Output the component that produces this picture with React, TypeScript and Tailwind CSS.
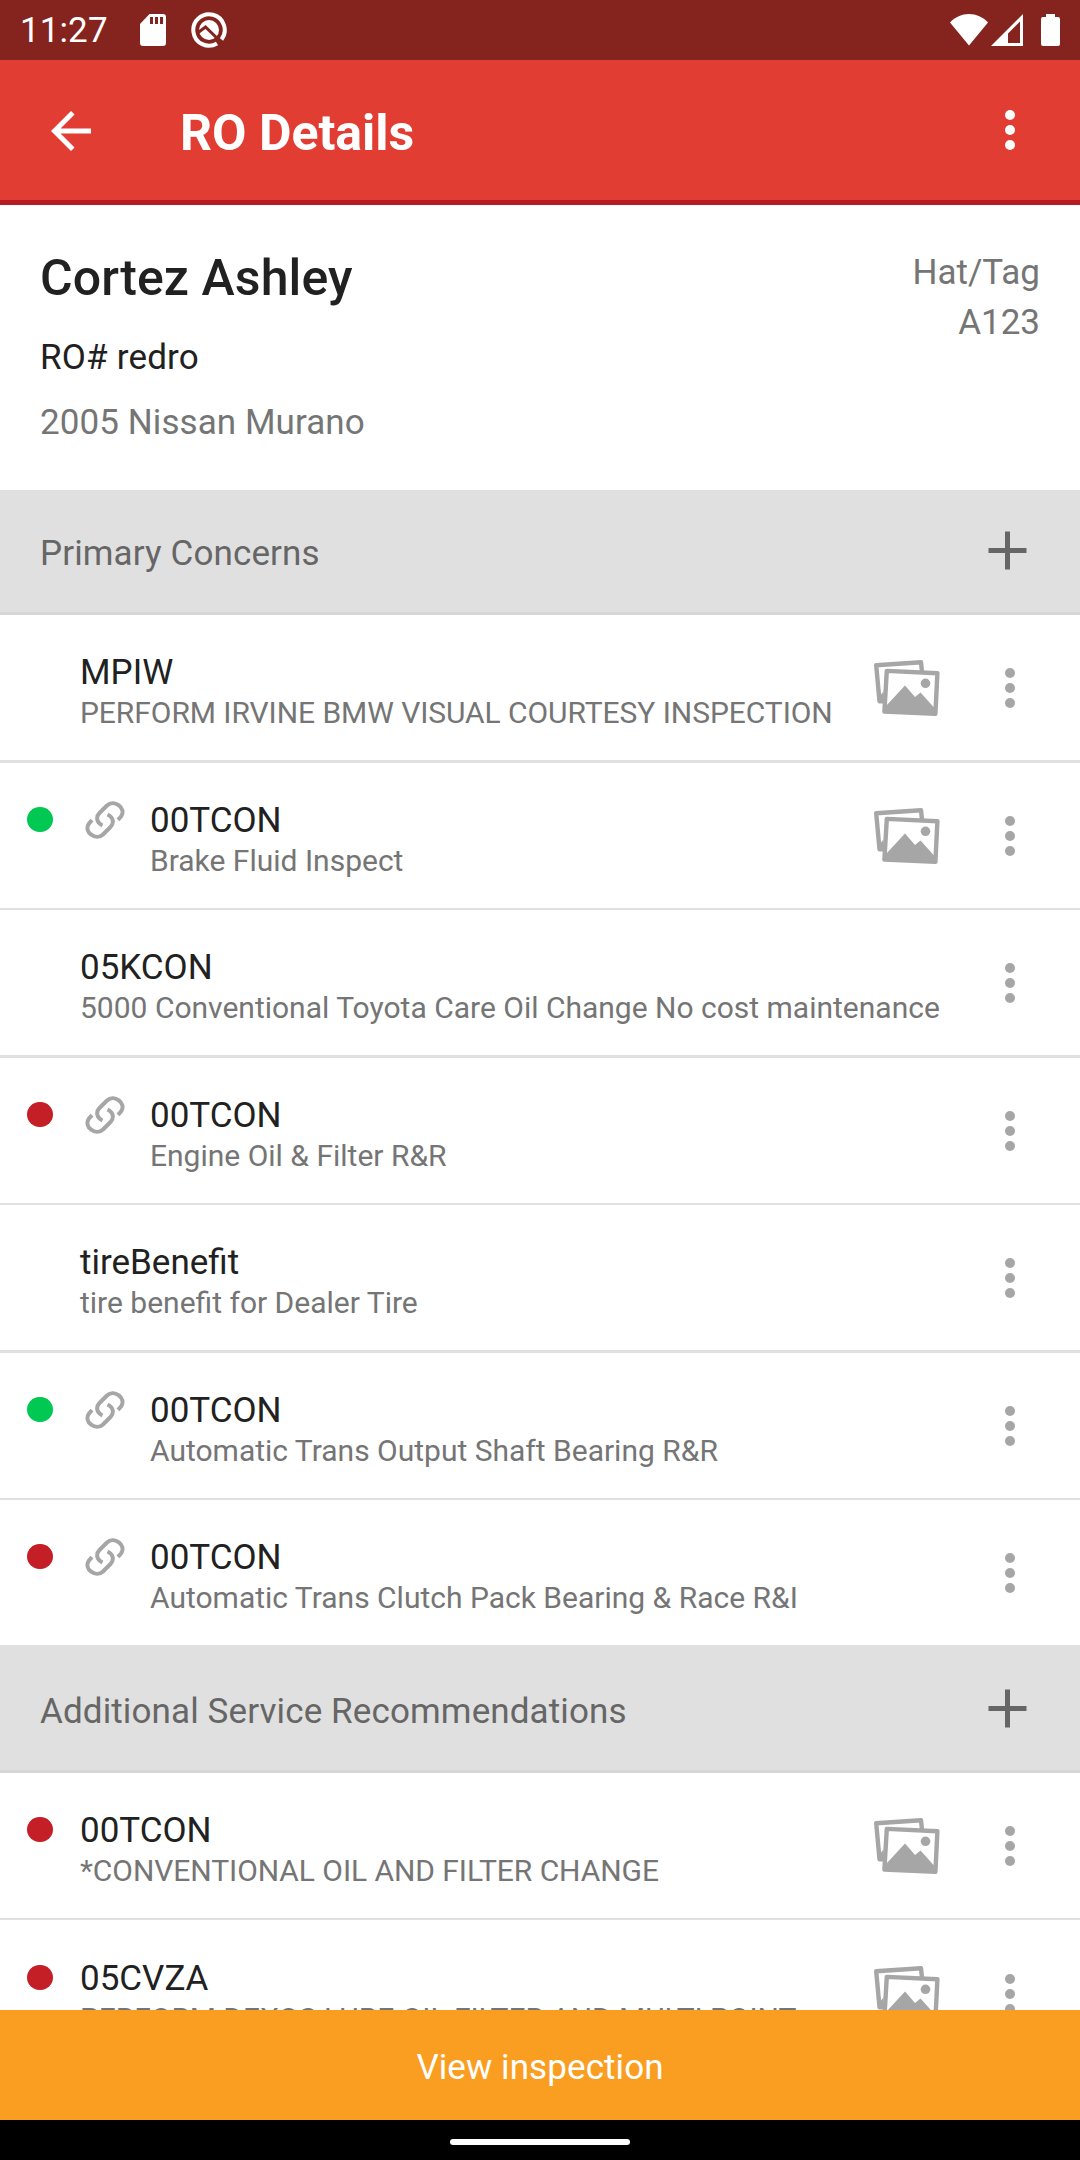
import React, { FC } from "react";

type Status = "green" | "red";

interface ServiceItem {
  code: string;
  description: string;
  status?: Status;
  linked?: boolean;
  photos?: boolean;
  // row height and thickness of the line below it
  height: string;
}

const primaryConcerns: ServiceItem[] = [
  { code: "MPIW", description: "PERFORM IRVINE BMW VISUAL COURTESY INSPECTION", photos: true, height: "h-[148px] border-b-3" },
  { code: "00TCON", description: "Brake Fluid Inspect", status: "green", linked: true, photos: true, height: "h-[147px] border-b-2" },
  { code: "05KCON", description: "5000 Conventional Toyota Care Oil Change No cost maintenance", height: "h-[148px] border-b-3" },
  { code: "00TCON", description: "Engine Oil & Filter R&R", status: "red", linked: true, height: "h-[147px] border-b-2" },
  { code: "tireBenefit", description: "tire benefit for Dealer Tire", height: "h-[148px] border-b-3" },
  { code: "00TCON", description: "Automatic Trans Output Shaft Bearing R&R", status: "green", linked: true, height: "h-[147px] border-b-2" },
  { code: "00TCON", description: "Automatic Trans Clutch Pack Bearing & Race R&I", status: "red", linked: true, height: "h-[148px] border-b-3" },
];

const recommendations: ServiceItem[] = [
  { code: "00TCON", description: "*CONVENTIONAL OIL AND FILTER CHANGE", status: "red", photos: true, height: "h-[147px] border-b-2" },
  { code: "05CVZA", description: "PERFORM DEXOS LUBE OIL FILTER AND MULTI POINT", status: "red", photos: true, height: "h-[148px] pt-px border-b-3" },
];

const SdCardIcon = () => (
  <svg className="w-[26px] h-8" viewBox="0 0 26 32" fill="#fff">
    <path
      fillRule="evenodd"
      d="M9.5 0H23a3 3 0 0 1 3 3v26a3 3 0 0 1-3 3H3a3 3 0 0 1-3-3V10zM10 3v7h3V3zm5 0v7h3V3zm5 0v7h3V3z"
    />
  </svg>
);

const DebugIcon = () => (
  <svg className="w-9 h-9" viewBox="0 0 36 36" fill="none">
    <path d="M30.500 27.500A15.700 15.700 0 1 0 26 31.500" stroke="#fff" strokeWidth="4" />
    <circle cx="18" cy="18" r="10" fill="#fff" />
    <path d="M6.500 21L14.500 15L31 31" stroke="#85241e" strokeWidth="3" />
  </svg>
);

const WifiIcon = () => (
  <svg className="w-[38px] h-8" viewBox="0 0 38 32" fill="#fff">
    <path d="M0 8.500C5 3 12 0 19 0s14 3 19 8.500L19 31.500z" />
  </svg>
);

const SignalIcon = () => (
  <svg className="w-8 h-8" viewBox="0 0 32 32" fill="#fff">
    <path fillRule="evenodd" d="M32 0v32H0zM29 7.500L17 19.500V29h12z" />
  </svg>
);

const BatteryIcon = () => (
  <svg className="w-[19px] h-8" viewBox="0 0 19 32" fill="#fff">
    <path d="M5 0h9v3h3a2 2 0 0 1 2 2v25a2 2 0 0 1-2 2H2a2 2 0 0 1-2-2V5a2 2 0 0 1 2-2h3z" />
  </svg>
);

const BackIcon = () => (
  <svg className="w-10 h-10" viewBox="0 0 16 16" fill="#fff">
    <path d="M16 7H3.830l5.590-5.590L8 0 0 8l8 8 1.410-1.410L3.830 9H16z" />
  </svg>
);

const MoreIcon = () => (
  <svg className="w-[10px] h-10 shrink-0" viewBox="0 0 10 40" fill="currentColor">
    <circle cx="5" cy="5" r="5" />
    <circle cx="5" cy="20" r="5" />
    <circle cx="5" cy="35" r="5" />
  </svg>
);

const PlusIcon = () => (
  <svg className="w-[39px] h-[39px]" viewBox="0 0 39 39" fill="#666">
    <path d="M17 .5h5V17h16.500v5H22v16.500h-5V22H.5v-5H17z" />
  </svg>
);

const LinkIcon = () => (
  <svg className="w-10 h-10" viewBox="0 0 40 40" fill="none" stroke="#a6a6a6" strokeWidth="4">
    <path d="M17.500 25.500C11 22.500 11 16.500 14.500 13L22 5.500C29 -1 42 8 36 16.500L33 19.800" />
    <path d="M22.500 14.500C29 17.500 29 23.500 25.500 27L18 34.500C11 41 -2 32 4 23.500L7 20.200" />
  </svg>
);

const PhotosIcon = () => (
  <svg className="w-[66px] h-14 shrink-0" viewBox="0 0 66 56">
    <g fill="none" stroke="#a6a6a6" strokeWidth="4.400" strokeLinejoin="round">
      <path d="M9 41.200L5.500 41.300L2.200 5.300L47 2.200L48 12" />
      <path d="M12.800 10.900L63.400 13.200L61.400 53.800L10.400 51.600z" />
    </g>
    <path d="M4.500 37.500l5-6v10h-5z" fill="#a6a6a6" />
    <path d="M12 46L31 25.500L41 37L46.500 32.500L60 47.500L60 54L11 52z" fill="#a6a6a6" />
    <circle cx="51.500" cy="23.300" r="4.800" fill="#a6a6a6" />
  </svg>
);

const StatusBar = () => (
  <div className="h-15 shrink-0 flex items-center bg-[#85241e] text-white pl-5 pr-5">
    <span className="w-[120px] mt-px text-[35px] leading-none tracking-[0.1px]">11:27</span>
    <SdCardIcon />
    <div className="ml-[25px]">
      <DebugIcon />
    </div>
    <div className="ml-auto -mt-px flex items-center">
      <WifiIcon />
      <div className="ml-[3px] mr-[18px]">
        <SignalIcon />
      </div>
      <BatteryIcon />
    </div>
  </div>
);

const Toolbar = () => (
  <div className="h-[145px] shrink-0 flex items-center bg-[#e13d33] border-b-5 border-[#b51c24] text-white pl-[51px] pr-[65px]">
    <div className="mt-0.5">
      <BackIcon />
    </div>
    <h1 className="ml-[89px] mt-[6px] text-[50px] leading-none font-bold">RO Details</h1>
    <div className="ml-auto">
      <MoreIcon />
    </div>
  </div>
);

const CustomerCard = () => (
  <div className="h-[285px] shrink-0 flex justify-between px-10 pt-11 text-[35px]">
    <div>
      <h2 className="text-[50px] leading-[58px] font-medium text-[#212121] tracking-[0.1px]">Cortez Ashley</h2>
      <p className="mt-[26px] leading-[50px] text-[#212121] tracking-[0.2px]">RO# redro</p>
      <p className="mt-[15px] leading-[50px] text-[#757575] tracking-[0.08px]">2005 Nissan Murano</p>
    </div>
    <div className="-mt-px leading-[50px] text-right text-[#757575]">
      <p>Hat/Tag</p>
      <p>A123</p>
    </div>
  </div>
);

const SectionHeader: FC<{ title: string }> = ({ title }) => (
  <div className="h-[125px] shrink-0 flex items-center justify-between bg-[#e0e0e0] border-b-3 border-[#d6d6d6] pl-10 pr-[53px]">
    <h3 className="mt-1 text-[35px] leading-none text-[#666] tracking-[0.12px]">{title}</h3>
    <div className="-mt-px">
      <PlusIcon />
    </div>
  </div>
);

const ServiceRow: FC<{ item: ServiceItem }> = ({ item }) => {
  const renderDot = () => {
    if (!item.status) return null;
    const color = item.status === "green" ? "bg-[#00c853]" : "bg-[#c41e26]";
    return <div className={`w-[26px] h-[25px] mt-[44px] rounded-full ${color}`} />;
  };

  const isUpper = item.description === item.description.toUpperCase();

  return (
    <div className={`shrink-0 flex border-[#e0e0e0] pr-[65px] ${item.height}`}>
      <div className="w-20 pl-[27px]">{renderDot()}</div>
      {item.linked && (
        <div className="w-[70px] pl-[5px] pt-[37px]">
          <LinkIcon />
        </div>
      )}
      <div className="flex-1 pt-[37px] whitespace-nowrap">
        <p className="text-[35px] leading-[41px] text-[#212121]">{item.code}</p>
        <p className={`-mt-px text-[30px] leading-[41px] text-[#757575] ${isUpper ? "tracking-[-0.06px]" : ""}`}>
          {item.description}
        </p>
      </div>
      <div className="flex h-[146px] items-center text-[#a6a6a6]">
        {item.photos && (
          <div className="mr-[65px]">
            <PhotosIcon />
          </div>
        )}
        <MoreIcon />
      </div>
    </div>
  );
};

export default function App() {
  return (
    <div className="w-[1080px] h-[2160px] flex flex-col overflow-hidden bg-white font-['Roboto',sans-serif]">
      <StatusBar />
      <Toolbar />
      <div className="flex-1 min-h-0 flex flex-col overflow-hidden">
        <CustomerCard />
        <SectionHeader title="Primary Concerns" />
        {primaryConcerns.map((item, index) => (
          <ServiceRow key={index} item={item} />
        ))}
        <SectionHeader title="Additional Service Recommendations" />
        {recommendations.map((item, index) => (
          <ServiceRow key={index} item={item} />
        ))}
      </div>
      <button className="h-[110px] shrink-0 bg-[#fa9e21] pt-[7px] text-white text-[35px] tracking-[0.08px]">
        View inspection
      </button>
      <div className="h-10 shrink-0 bg-black flex items-center justify-center">
        <div className="w-[180px] h-[6px] mt-[4px] rounded-full bg-white" />
      </div>
    </div>
  );
}
